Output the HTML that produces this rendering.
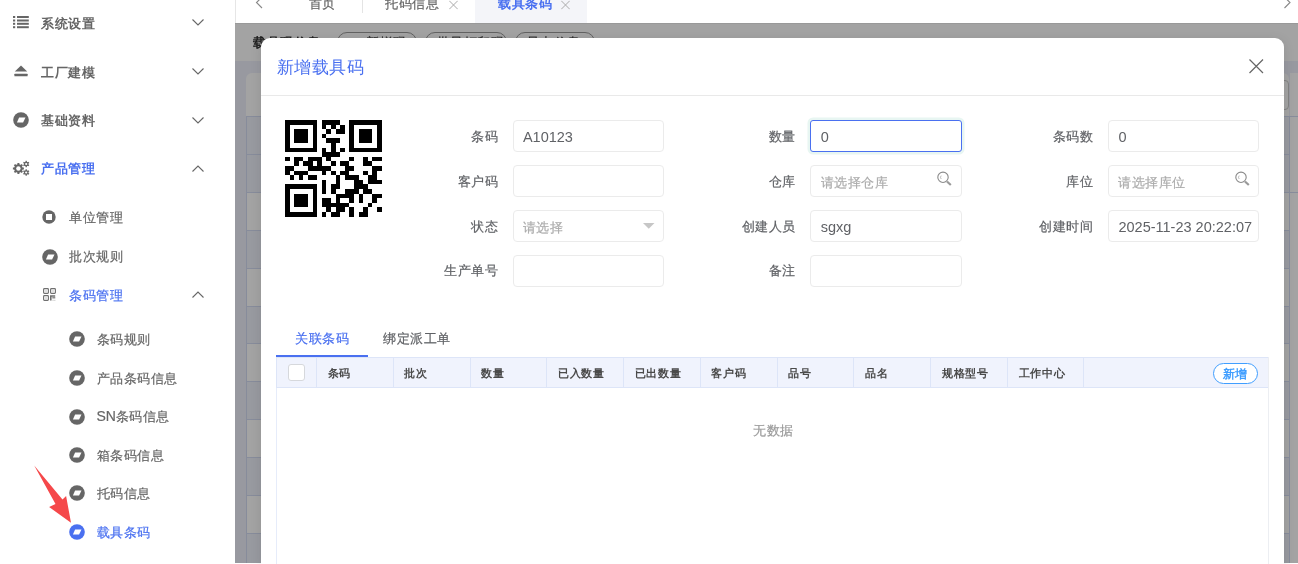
<!DOCTYPE html>
<html><head><meta charset="utf-8">
<style>
*{box-sizing:border-box;margin:0;padding:0}
html,body{width:1298px;height:564px;overflow:hidden;background:#fff;font-family:"Liberation Sans",sans-serif;font-size:14px;color:#606266}
.a{position:absolute;white-space:nowrap}
.gs{will-change:transform}
.mi{font-size:13px;line-height:20px;letter-spacing:0.5px;color:#666;-webkit-text-stroke:0.2px}
.b{font-weight:bold}
.mi.b{-webkit-text-stroke:0}
.blue{color:#4a70f0}
.lbl{width:100px;text-align:right;font-size:13px;line-height:20px;letter-spacing:0.5px;color:#606266;-webkit-text-stroke:0.2px}
.cj{font-size:13px;letter-spacing:0.5px}
.inp{width:151.3px;height:32.3px;border:1px solid #ebebeb;border-radius:4px;background:#fff;font-size:14px;line-height:32px;padding-left:9.3px;color:#606266;font-size:14.5px}
.ph{color:#ababab;-webkit-text-stroke:0.2px}
.th{top:367px;font-size:11px;font-weight:bold;line-height:12px;letter-spacing:0.8px;color:#4a4a4a}
.vl{top:357px;width:1px;height:30px;background:#dde5f8}
</style></head><body><div class="gs" style="position:absolute;left:0;top:0;width:1298px;height:564px">
<svg class="a" style="left:13px;top:16px" width="16" height="13" viewBox="0 0 16 13" fill="#666">
<rect x="0" y="0" width="2.2" height="2"/><rect x="4" y="0" width="11.8" height="2"/>
<rect x="0" y="3.5" width="2.2" height="2"/><rect x="4" y="3.5" width="11.8" height="2"/>
<rect x="0" y="6.8" width="2.2" height="2"/><rect x="4" y="6.8" width="11.8" height="2"/>
<rect x="0" y="10.2" width="2.2" height="2"/><rect x="4" y="10.2" width="11.8" height="2"/></svg>
<div class="a mi b" style="left:41px;top:14px">系统设置</div>
<svg class="a" style="left:192px;top:19.3px" width="12" height="7" viewBox="0 0 12 7"><path d="M0.5 0.5L6 6L11.5 0.5" fill="none" stroke="#666" stroke-width="1.1"/></svg>
<svg class="a" style="left:14px;top:65px" width="14" height="12" viewBox="0 0 14 12" fill="#666"><path d="M7 0.5L13.2 6.5H0.8Z"/><rect x="0.4" y="8.7" width="13.2" height="2.5" rx="0.5"/></svg>
<div class="a mi b" style="left:41px;top:63px">工厂建模</div>
<svg class="a" style="left:192px;top:68px" width="12" height="7" viewBox="0 0 12 7"><path d="M0.5 0.5L6 6L11.5 0.5" fill="none" stroke="#666" stroke-width="1.1"/></svg>
<svg class="a" style="left:13px;top:112px" width="16" height="16" viewBox="0 0 16 16"><circle cx="8" cy="8" r="7.8" fill="#666"/><path d="M3.9 10.6L6.1 5.5H12.5L10.1 10.6Z" fill="#fff"/></svg>
<div class="a mi b" style="left:41px;top:111px">基础资料</div>
<svg class="a" style="left:192px;top:116.5px" width="12" height="7" viewBox="0 0 12 7"><path d="M0.5 0.5L6 6L11.5 0.5" fill="none" stroke="#666" stroke-width="1.1"/></svg>
<svg class="a" style="left:12px;top:160px" width="19" height="17" viewBox="0 0 19 17" fill="#666">
<g transform="translate(6.4,8.5)"><circle r="4.3"/><rect x="-1" y="-5.5" width="2" height="11"/><rect x="-1" y="-5.5" width="2" height="11" transform="rotate(45)"/><rect x="-1" y="-5.5" width="2" height="11" transform="rotate(90)"/><rect x="-1" y="-5.5" width="2" height="11" transform="rotate(135)"/><circle r="2.2" fill="#fff"/></g>
<g transform="translate(14.2,4)"><circle r="2.3"/><rect x="-0.7" y="-3.2" width="1.4" height="6.4"/><rect x="-0.7" y="-3.2" width="1.4" height="6.4" transform="rotate(60)"/><rect x="-0.7" y="-3.2" width="1.4" height="6.4" transform="rotate(120)"/><circle r="1.1" fill="#fff"/></g>
<g transform="translate(14.2,12.5)"><circle r="2.3"/><rect x="-0.7" y="-3.2" width="1.4" height="6.4"/><rect x="-0.7" y="-3.2" width="1.4" height="6.4" transform="rotate(60)"/><rect x="-0.7" y="-3.2" width="1.4" height="6.4" transform="rotate(120)"/><circle r="1.1" fill="#fff"/></g></svg>
<div class="a mi b blue" style="left:41px;top:159px">产品管理</div>
<svg class="a" style="left:192px;top:165px" width="12" height="7" viewBox="0 0 12 7"><path d="M0.5 6.5L6 1L11.5 6.5" fill="none" stroke="#666" stroke-width="1.1"/></svg>
<svg class="a" style="left:42px;top:210px" width="14" height="14" viewBox="0 0 14 14"><circle cx="7" cy="7" r="6.7" fill="#666"/><rect x="4" y="4" width="6" height="6" fill="#fff"/></svg>
<div class="a mi" style="left:69px;top:208px">单位管理</div>
<svg class="a" style="left:42px;top:249px" width="16" height="16" viewBox="0 0 16 16"><circle cx="8" cy="8" r="7.8" fill="#666"/><path d="M3.9 10.6L6.1 5.5H12.5L10.1 10.6Z" fill="#fff"/></svg>
<div class="a mi" style="left:69px;top:247px">批次规则</div>
<svg class="a" style="left:43px;top:288px" width="13" height="13" viewBox="0 0 13 13" fill="none" stroke="#707070" stroke-width="1.15">
<rect x="0.6" y="0.6" width="4.8" height="4.8" rx="0.8"/><rect x="7.6" y="0.6" width="4.8" height="4.8" rx="0.8"/><rect x="0.6" y="7.6" width="4.8" height="4.8" rx="0.8"/>
<rect x="2.4" y="2.5" width="1.2" height="1" fill="#999" stroke="none"/><rect x="9.4" y="2.5" width="1.2" height="1" fill="#999" stroke="none"/><rect x="2.4" y="9.5" width="1.2" height="1" fill="#999" stroke="none"/>
<path d="M7.8 12.4V8H12.2" stroke-width="1.6"/><path d="M9.3 9.8h3" stroke-width="1.2"/><path d="M9.6 12.3h0.9M11.4 12.3h0.9" stroke="#aaa" stroke-width="0.9"/></svg>
<div class="a mi blue" style="left:69px;top:286px">条码管理</div>
<svg class="a" style="left:192px;top:291.3px" width="12" height="7" viewBox="0 0 12 7"><path d="M0.5 6.5L6 1L11.5 6.5" fill="none" stroke="#666" stroke-width="1.1"/></svg>
<svg class="a" style="left:68.5px;top:330.8px" width="16" height="16" viewBox="0 0 16 16"><circle cx="8" cy="8" r="7.8" fill="#666"/><path d="M3.9 10.6L6.1 5.5H12.5L10.1 10.6Z" fill="#fff"/></svg>
<div class="a mi" style="left:96.5px;top:329.8px">条码规则</div>
<svg class="a" style="left:68.5px;top:369.9px" width="16" height="16" viewBox="0 0 16 16"><circle cx="8" cy="8" r="7.8" fill="#666"/><path d="M3.9 10.6L6.1 5.5H12.5L10.1 10.6Z" fill="#fff"/></svg>
<div class="a mi" style="left:96.5px;top:368.9px">产品条码信息</div>
<svg class="a" style="left:68.5px;top:408.5px" width="16" height="16" viewBox="0 0 16 16"><circle cx="8" cy="8" r="7.8" fill="#666"/><path d="M3.9 10.6L6.1 5.5H12.5L10.1 10.6Z" fill="#fff"/></svg>
<div class="a mi" style="left:96.5px;top:405.5px"><span style="font-size:14px;letter-spacing:0">SN</span>条码信息</div>
<svg class="a" style="left:68.5px;top:446.5px" width="16" height="16" viewBox="0 0 16 16"><circle cx="8" cy="8" r="7.8" fill="#666"/><path d="M3.9 10.6L6.1 5.5H12.5L10.1 10.6Z" fill="#fff"/></svg>
<div class="a mi" style="left:96.5px;top:445.5px">箱条码信息</div>
<svg class="a" style="left:68.5px;top:484.5px" width="16" height="16" viewBox="0 0 16 16"><circle cx="8" cy="8" r="7.8" fill="#666"/><path d="M3.9 10.6L6.1 5.5H12.5L10.1 10.6Z" fill="#fff"/></svg>
<div class="a mi" style="left:96.5px;top:483.5px">托码信息</div>
<svg class="a" style="left:68.5px;top:523.9px" width="16" height="16" viewBox="0 0 16 16"><circle cx="8" cy="8" r="7.8" fill="#4a70f0"/><path d="M3.9 10.6L6.1 5.5H12.5L10.1 10.6Z" fill="#fff"/></svg>
<div class="a mi blue" style="left:96.5px;top:522.9px">载具条码</div>
<div class="a" style="left:235px;top:0;width:1063px;height:23px;background:#fff;border-left:1px solid #e6e6e6">
<svg class="a" style="left:19px;top:-3px" width="9" height="13" viewBox="0 0 9 13"><path d="M7 0L1.5 5.5L7 11" fill="none" stroke="#888" stroke-width="1.1"/></svg>
<div class="a mi" style="left:72.5px;top:-6px">首页</div>
<div class="a" style="left:126px;top:0;width:1px;height:13px;background:#e4e4e4"></div>
<div class="a mi" style="left:149px;top:-6px">托码信息</div>
<svg class="a" style="left:212.6px;top:-0.5px" width="9" height="10" viewBox="0 0 9 10"><path d="M0.3 0.8L8.7 9.2M8.7 0.8L0.3 9.2" stroke="#aaa" stroke-width="1"/></svg>
<div class="a" style="left:238.6px;top:0;width:112.5px;height:23px;background:#f4f5f9"></div>
<div class="a mi b blue" style="left:262px;top:-6px">载具条码</div>
<svg class="a" style="left:325.4px;top:-0.5px" width="9" height="10" viewBox="0 0 9 10"><path d="M0.3 0.8L8.7 9.2M8.7 0.8L0.3 9.2" stroke="#aaa" stroke-width="1"/></svg>
<svg class="a" style="left:1047px;top:-3px" width="9" height="13" viewBox="0 0 9 13"><path d="M1.5 0L7 5.5L1.5 11" fill="none" stroke="#888" stroke-width="1.1"/></svg>
</div>
<div class="a" style="left:235px;top:23px;width:1063px;height:540px;background:#eef0fa;overflow:hidden">
<div class="a" style="left:0;top:0;width:1063px;height:38px;background:#fff"></div>
<div class="a mi b" style="left:18px;top:9.5px;color:#333">载具码信息</div>
<div class="a" style="left:101.5px;top:8.8px;width:80.5px;height:30px;border:1px solid #999;border-radius:10px"></div>
<div class="a" style="left:189.5px;top:8.8px;width:82px;height:30px;border:1px solid #999;border-radius:10px"></div>
<div class="a" style="left:279.5px;top:8.8px;width:80.5px;height:30px;border:1px solid #999;border-radius:10px"></div>
<div class="a mi" style="left:131px;top:9.5px;color:#444">新增码</div>
<div class="a mi" style="left:201.5px;top:9.5px;color:#444">批量打印码</div>
<div class="a mi" style="left:291.5px;top:9.5px;color:#444">导出信息</div>
<div class="a" style="left:11px;top:50px;width:1043px;height:500px;background:#fff;border-radius:6px 6px 0 0"></div>
<div class="a" style="left:1042px;top:57px;width:12px;height:30px;border:1px solid #ccc;border-radius:4px"></div>
<div class="a" style="left:11px;top:93px;width:1043px;height:38px;background:#eef1fb"></div>
<div class="a" style="left:11px;top:93px;width:1043px;height:1px;background:#d3dbf3"></div>
<div class="a" style="left:11px;top:131px;width:1043px;height:38px;background:#eef1fb"></div>
<div class="a" style="left:11px;top:131px;width:1043px;height:1px;background:#d3dbf3"></div>
<div class="a" style="left:11px;top:169px;width:1043px;height:1px;background:#d3dbf3"></div>
<div class="a" style="left:11px;top:207px;width:1043px;height:38px;background:#eef1fb"></div>
<div class="a" style="left:11px;top:207px;width:1043px;height:1px;background:#d3dbf3"></div>
<div class="a" style="left:11px;top:245px;width:1043px;height:1px;background:#d3dbf3"></div>
<div class="a" style="left:11px;top:283px;width:1043px;height:37px;background:#eef1fb"></div>
<div class="a" style="left:11px;top:283px;width:1043px;height:1px;background:#d3dbf3"></div>
<div class="a" style="left:11px;top:320px;width:1043px;height:1px;background:#d3dbf3"></div>
<div class="a" style="left:11px;top:358px;width:1043px;height:38px;background:#eef1fb"></div>
<div class="a" style="left:11px;top:358px;width:1043px;height:1px;background:#d3dbf3"></div>
<div class="a" style="left:11px;top:396px;width:1043px;height:1px;background:#d3dbf3"></div>
<div class="a" style="left:11px;top:434px;width:1043px;height:38px;background:#eef1fb"></div>
<div class="a" style="left:11px;top:434px;width:1043px;height:1px;background:#d3dbf3"></div>
<div class="a" style="left:11px;top:472px;width:1043px;height:1px;background:#d3dbf3"></div>
<div class="a" style="left:11px;top:510px;width:1043px;height:30px;background:#eef1fb"></div>
<div class="a" style="left:11px;top:510px;width:1043px;height:1px;background:#d3dbf3"></div>
<div class="a" style="left:11px;top:93px;width:1px;height:470px;background:#d3dbf3"></div>
<div class="a" style="left:1054px;top:93px;width:1px;height:470px;background:#d3dbf3"></div>
<div class="a" style="left:1055px;top:50px;width:20px;height:520px;background:#fff"></div>
<div class="a" style="left:1055px;top:93px;width:20px;height:1px;background:#d3dbf3"></div>
<div class="a" style="left:1055px;top:169px;width:20px;height:1px;background:#d3dbf3"></div>
</div>
<div class="a" style="left:235px;top:23px;width:1063px;height:540px;background:rgba(0,0,0,0.36)"></div>
<div class="a" style="left:235px;top:23px;width:1063px;height:1px;background:rgba(0,0,0,0.06)"></div>
<div class="a" style="left:261.2px;top:38.3px;width:1022.8px;height:530px;background:#fff;border-radius:9px 9px 0 0;box-shadow:0 2px 12px rgba(0,0,0,0.1)"></div>
<div class="a" style="left:276.5px;top:55px;font-size:17px;letter-spacing:0.5px;line-height:26px;color:#4a70f0">新增载具码</div>
<div class="a" style="left:261.2px;top:95px;width:1022.8px;height:1px;background:#e9e9e9"></div>
<svg class="a" style="left:1249px;top:59px" width="15" height="15" viewBox="0 0 15 15"><path d="M0.5 0.5L14 14M14 0.5L0.5 14" stroke="#666" stroke-width="1.2"/></svg>
<svg class="a" style="left:285.4px;top:120px" width="96.6" height="96.6" viewBox="0 0 21 21" shape-rendering="crispEdges"><path d="M0 0h7v1h-7zM8 0h4v1h-4zM14 0h7v1h-7zM0 1h1v1h-1zM6 1h1v1h-1zM8 1h1v1h-1zM10 1h1v1h-1zM12 1h1v1h-1zM14 1h1v1h-1zM20 1h1v1h-1zM0 2h1v1h-1zM2 2h3v1h-3zM6 2h1v1h-1zM9 2h1v1h-1zM11 2h2v1h-2zM14 2h1v1h-1zM16 2h3v1h-3zM20 2h1v1h-1zM0 3h1v1h-1zM2 3h3v1h-3zM6 3h1v1h-1zM8 3h1v1h-1zM14 3h1v1h-1zM16 3h3v1h-3zM20 3h1v1h-1zM0 4h1v1h-1zM2 4h3v1h-3zM6 4h1v1h-1zM9 4h3v1h-3zM14 4h1v1h-1zM16 4h3v1h-3zM20 4h1v1h-1zM0 5h1v1h-1zM6 5h1v1h-1zM10 5h1v1h-1zM14 5h1v1h-1zM20 5h1v1h-1zM0 6h7v1h-7zM8 6h1v1h-1zM10 6h1v1h-1zM12 6h1v1h-1zM14 6h7v1h-7zM8 7h4v1h-4zM0 8h1v1h-1zM2 8h2v1h-2zM5 8h3v1h-3zM9 8h1v1h-1zM14 8h1v1h-1zM17 8h1v1h-1zM19 8h2v1h-2zM2 9h1v1h-1zM4 9h2v1h-2zM7 9h1v1h-1zM10 9h1v1h-1zM12 9h2v1h-2zM17 9h2v1h-2zM0 10h2v1h-2zM5 10h5v1h-5zM13 10h2v1h-2zM19 10h2v1h-2zM0 11h1v1h-1zM2 11h3v1h-3zM8 11h1v1h-1zM10 11h1v1h-1zM12 11h2v1h-2zM17 11h1v1h-1zM19 11h1v1h-1zM1 12h1v1h-1zM3 12h1v1h-1zM5 12h2v1h-2zM11 12h1v1h-1zM13 12h3v1h-3zM18 12h2v1h-2zM8 13h1v1h-1zM11 13h1v1h-1zM15 13h2v1h-2zM18 13h3v1h-3zM0 14h7v1h-7zM8 14h1v1h-1zM10 14h2v1h-2zM15 14h3v1h-3zM0 15h1v1h-1zM6 15h1v1h-1zM8 15h1v1h-1zM10 15h1v1h-1zM13 15h3v1h-3zM17 15h2v1h-2zM0 16h1v1h-1zM2 16h3v1h-3zM6 16h1v1h-1zM11 16h4v1h-4zM16 16h1v1h-1zM19 16h2v1h-2zM0 17h1v1h-1zM2 17h3v1h-3zM6 17h1v1h-1zM8 17h2v1h-2zM11 17h1v1h-1zM14 17h1v1h-1zM16 17h1v1h-1zM19 17h1v1h-1zM0 18h1v1h-1zM2 18h3v1h-3zM6 18h1v1h-1zM8 18h6v1h-6zM18 18h1v1h-1zM0 19h1v1h-1zM6 19h1v1h-1zM9 19h1v1h-1zM11 19h2v1h-2zM14 19h1v1h-1zM17 19h1v1h-1zM20 19h1v1h-1zM0 20h7v1h-7zM8 20h1v1h-1zM10 20h2v1h-2zM14 20h1v1h-1zM16 20h2v1h-2z" fill="#000"/></svg>
<div class="a lbl" style="left:398px;top:126.8px">条码</div>
<div class="a inp" style="left:512.6px;top:120.1px"><span class="" style="position:relative;top:0.4px;">A10123</span></div>
<div class="a lbl" style="left:695.5px;top:126.8px">数量</div>
<div class="a inp" style="left:810.4px;top:120.1px;border-color:#4a70f0;box-shadow:0 0 0 2.5px #e8f6f2;border-radius:3px"><span class="" style="position:relative;top:0.4px;">0</span></div>
<div class="a lbl" style="left:993px;top:126.8px">条码数</div>
<div class="a inp" style="left:1108.2px;top:120.1px"><span class="" style="position:relative;top:0.4px;">0</span></div>
<div class="a lbl" style="left:398px;top:171.79999999999998px">客户码</div>
<div class="a inp" style="left:512.6px;top:165.1px"><span class="" style="position:relative;top:0.4px;"></span></div>
<div class="a lbl" style="left:695.5px;top:171.79999999999998px">仓库</div>
<div class="a inp" style="left:810.4px;top:165.1px"><span class="ph cj" style="position:relative;top:0.4px;">请选择仓库</span></div>
<svg class="a" style="left:936.4px;top:170.1px" width="18" height="18" viewBox="0 0 18 18"><circle cx="7" cy="7.3" r="5.2" fill="none" stroke="#8a8a8a" stroke-width="1.1"/><path d="M5.2 5.6A2.6 2.6 0 0 0 5.2 9" fill="none" stroke="#aaa" stroke-width="0.8"/><path d="M11 11.4L14.8 15.1" stroke="#999" stroke-width="2.1"/></svg>
<div class="a lbl" style="left:993px;top:171.79999999999998px">库位</div>
<div class="a inp" style="left:1108.2px;top:165.1px"><span class="ph cj" style="position:relative;top:0.4px;">请选择库位</span></div>
<svg class="a" style="left:1234.2px;top:170.1px" width="18" height="18" viewBox="0 0 18 18"><circle cx="7" cy="7.3" r="5.2" fill="none" stroke="#8a8a8a" stroke-width="1.1"/><path d="M5.2 5.6A2.6 2.6 0 0 0 5.2 9" fill="none" stroke="#aaa" stroke-width="0.8"/><path d="M11 11.4L14.8 15.1" stroke="#999" stroke-width="2.1"/></svg>
<div class="a lbl" style="left:398px;top:216.5px">状态</div>
<div class="a inp" style="left:512.6px;top:209.8px"><span class="ph cj" style="position:relative;top:0.4px;">请选择</span></div>
<svg class="a" style="left:643.0px;top:223.0px" width="11.5" height="6" viewBox="0 0 11.5 6"><path d="M0 0H11.5L5.75 5.8Z" fill="#c6c6c6"/></svg>
<div class="a lbl" style="left:695.5px;top:216.5px">创建人员</div>
<div class="a inp" style="left:810.4px;top:209.8px"><span class="" style="position:relative;top:0.4px;">sgxg</span></div>
<div class="a lbl" style="left:993px;top:216.5px">创建时间</div>
<div class="a inp" style="left:1108.2px;top:209.8px"><span class="" style="position:relative;top:0.4px;">2025-11-23 20:22:07</span></div>
<div class="a lbl" style="left:398px;top:261.3px">生产单号</div>
<div class="a inp" style="left:512.6px;top:254.6px"><span class="" style="position:relative;top:0.4px;"></span></div>
<div class="a lbl" style="left:695.5px;top:261.3px">备注</div>
<div class="a inp" style="left:810.4px;top:254.6px"><span class="" style="position:relative;top:0.4px;"></span></div>
<div class="a mi" style="left:295px;top:328.5px;color:#4a70f0">关联条码</div>
<div class="a mi" style="left:383px;top:328.5px;color:#606266">绑定派工单</div>
<div class="a" style="left:276px;top:355px;width:92px;height:2px;background:#4a70f0"></div>
<div class="a" style="left:276px;top:357px;width:993px;height:31px;background:#f0f3fd;border:1px solid #dde5f8;border-right:none"></div>
<div class="a" style="left:276px;top:388px;width:1px;height:176px;background:#e6ecfa"></div>
<div class="a" style="left:1268px;top:357px;width:1px;height:207px;background:#eceef2"></div>
<div class="a" style="left:287.6px;top:364.3px;width:17.2px;height:17.2px;border:1px solid #d6d8dc;border-radius:3px;background:#fff"></div>
<div class="a vl" style="left:316.0px"></div>
<div class="a vl" style="left:392.8px"></div>
<div class="a vl" style="left:469.9px"></div>
<div class="a vl" style="left:546.3px"></div>
<div class="a vl" style="left:623.2px"></div>
<div class="a vl" style="left:699.9px"></div>
<div class="a vl" style="left:776.6px"></div>
<div class="a vl" style="left:853.3px"></div>
<div class="a vl" style="left:930.3px"></div>
<div class="a vl" style="left:1007.2px"></div>
<div class="a vl" style="left:1083.1px"></div>
<div class="a th" style="left:327.5px">条码</div>
<div class="a th" style="left:404.3px">批次</div>
<div class="a th" style="left:481.4px">数量</div>
<div class="a th" style="left:557.8px">已入数量</div>
<div class="a th" style="left:634.7px">已出数量</div>
<div class="a th" style="left:711.4px">客户码</div>
<div class="a th" style="left:788.1px">品号</div>
<div class="a th" style="left:864.8px">品名</div>
<div class="a th" style="left:941.8px">规格型号</div>
<div class="a th" style="left:1018.7px">工作中心</div>
<div class="a" style="left:1213px;top:363px;width:45px;height:21px;border:1px solid #409eff;border-radius:11px;background:#fff"></div>
<div class="a b" style="left:1223px;top:367px;font-size:12px;line-height:14px;color:#409eff">新增</div>
<div class="a mi" style="left:753px;top:421px;color:#999">无数据</div>
<svg class="a" style="left:0;top:0" width="100" height="564" viewBox="0 0 100 564"><path d="M34.2 465.6L62.5 499.6L66.1 496.1L71 522.7L49.1 507.1L55.5 503.9Z" fill="#f5484a"/></svg>
</div></body></html>
